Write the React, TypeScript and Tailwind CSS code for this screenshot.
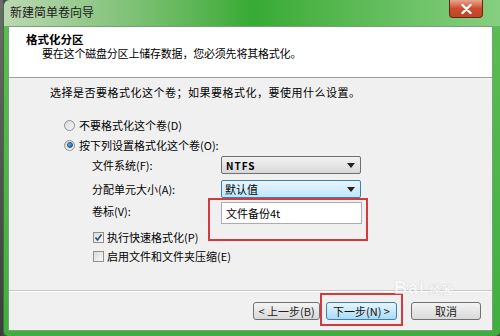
import React from "react";

const font = { fontFamily: '"Noto Sans CJK SC", "Noto Sans", sans-serif' };

function Radio({ checked }: { checked?: boolean }) {
  return (
    <span className="w-[11px] h-[11px] rounded-full border border-[#8e8f8f] bg-gradient-to-br from-[#d8d8d8] to-[#f8f8f8] flex items-center justify-center shrink-0">
      {checked && (
        <span className="w-[6px] h-[6px] rounded-full bg-gradient-to-br from-[#7dc3f0] to-[#1a5f9c] border border-[#1b4f80]" />
      )}
    </span>
  );
}

function Check({ checked }: { checked?: boolean }) {
  return (
    <span className="w-[11px] h-[11px] border border-[#8e8f8f] bg-gradient-to-br from-[#dcdcdc] to-[#f8f8f8] flex items-center justify-center shrink-0">
      {checked && (
        <svg width="9" height="9" viewBox="0 0 9 9">
          <path d="M1.5 4.5 L3.5 7 L7.5 1.5" stroke="#2b4c78" strokeWidth="1.6" fill="none" />
        </svg>
      )}
    </span>
  );
}

function Arrow() {
  return (
    <svg width="8" height="5" viewBox="0 0 8 5" className="shrink-0">
      <path d="M0 0 H8 L4 5 Z" fill="#222" />
    </svg>
  );
}

export default function App() {
  return (
    <div className="w-[500px] h-[336px] flex overflow-hidden bg-[#4a4a4a] relative text-[11px] text-black" style={font}>
      <div className="w-[3px] bg-gradient-to-b from-[#6b6b6b] to-[#3d3d3d]" />
      <div className="flex-1 flex flex-col rounded-tl-[6px] rounded-b-[5px] bg-gradient-to-b from-[#5cbd55] to-[#3fae3f] border-l border-[#2f7a2f]">
        {/* title bar */}
        <div className="h-[26px] flex items-center pl-[6px] relative bg-gradient-to-r from-[#bcd8b4] via-[#36aa32] to-[#86cf80] rounded-tl-[6px]">
          <span className="text-[12px] leading-[14px] text-[#1a1a1a] pb-[2px]">新建简单卷向导</span>
          <div className="absolute left-[445px] top-0 w-[34px] h-[18px] rounded-b-[4px] border border-t-0 border-[#6b2414] bg-gradient-to-b from-[#e8a58e] via-[#cc4b2c] to-[#c0462a] flex items-center justify-center">
            <svg width="11" height="10" viewBox="0 0 11 10">
              <path d="M1.5 1 L9.5 9 M9.5 1 L1.5 9" stroke="#fff" strokeWidth="2.4" strokeLinecap="round" />
            </svg>
          </div>
        </div>
        {/* content */}
        <div className="flex-1 flex flex-col ml-[4px] mr-[7px] mb-[5px] border border-[#7aa07a] relative">
          <div className="h-[50px] bg-white flex flex-col pt-[5px]">
            <div className="pl-[17px] text-[11.5px] leading-[14px] font-bold">格式化分区</div>
            <div className="pl-[33px] leading-[14px] tracking-[-0.2px]">要在这个磁盘分区上储存数据，您必须先将其格式化。</div>
          </div>
          <div className="h-px bg-[#a0a0a0]" />
          <div className="flex-1 bg-[#f0f0f0] flex flex-col">
            <div className="pl-[41px] pt-[7px] leading-[14px] tracking-[0.5px]">选择是否要格式化这个卷；如果要格式化，要使用什么设置。</div>
            <div className="pl-[55px] mt-[19px] h-[14px] flex items-center gap-[4px]">
              <Radio />
              <span className="leading-[14px]">不要格式化这个卷(D)</span>
            </div>
            <div className="pl-[55px] mt-[6px] h-[14px] flex items-center gap-[4px]">
              <Radio checked />
              <span className="leading-[14px]">按下列设置格式化这个卷(O):</span>
            </div>
            <div className="pl-[83px] mt-[4px] flex items-center h-[18px]">
              <span className="w-[129px]">文件系统(F):</span>
              <div className="w-[140px] h-[18px] rounded-[2px] border border-[#707070] bg-gradient-to-b from-[#f2f2f2] to-[#d8d8d8] flex items-center justify-between pl-[4px] pr-[5px]">
                <span className="font-bold tracking-[1px] text-[10px]">NTFS</span>
                <Arrow />
              </div>
            </div>
            <div className="pl-[83px] mt-[6px] flex items-center h-[18px]">
              <span className="w-[129px]">分配单元大小(A):</span>
              <div className="w-[140px] h-[18px] rounded-[2px] border border-[#3c7fb1] bg-gradient-to-b from-[#eaf6fd] to-[#bee6fd] flex items-center justify-between pl-[2px] pr-[5px]">
                <span className="px-[1px] leading-[14px]">默认值</span>
                <Arrow />
              </div>
            </div>
            <div className="pl-[83px] mt-[4px] flex items-center h-[22px]">
              <span className="w-[129px] pb-[4px]">卷标(V):</span>
              <div className="w-[141px] h-[22px] border border-[#abadb3] bg-white flex items-center pl-[4px]">
                <span className="leading-[14px]">文件备份4t</span>
              </div>
            </div>
            <div className="pl-[84px] mt-[6px] h-[14px] flex items-center gap-[3px]">
              <Check checked />
              <span className="leading-[14px]">执行快速格式化(P)</span>
            </div>
            <div className="pl-[84px] mt-[5px] h-[14px] flex items-center gap-[3px]">
              <Check />
              <span className="leading-[14px]">启用文件和文件夹压缩(E)</span>
            </div>
            <div className="flex-1" />
            <div className="h-px bg-[#c8c8c8]" />
            <div className="h-px bg-white" />
            <div className="pt-[10px] pb-[10px] pr-[11px] flex justify-end">
              <button className="w-[67px] h-[18px] rounded-[3px] border border-[#707070] bg-gradient-to-b from-[#f4f4f4] to-[#d9d9d9] flex items-center justify-center leading-[14px] text-[#222]">
                &lt; 上一步(B)
              </button>
              <button className="ml-[6px] w-[71px] h-[18px] rounded-[3px] border border-[#3c7fb1] bg-gradient-to-b from-[#e9f6fd] to-[#a9dbf6] flex items-center justify-center leading-[14px] text-[#111]">
                下一步(N) &gt;
              </button>
              <button className="ml-[14px] w-[70px] h-[18px] rounded-[3px] border border-[#707070] bg-gradient-to-b from-[#f4f4f4] to-[#d9d9d9] flex items-center justify-center leading-[14px] text-[#222]">
                取消
              </button>
            </div>
          </div>
          {/* red annotation boxes */}
          <div className="absolute left-[199px] top-[171px] w-[160px] h-[43px] border-2 border-[#d23a3e]" />
          <div className="absolute left-[311px] top-[266px] w-[83px] h-[33px] border-2 border-[#d23a3e]" />
          {/* watermark */}
          <div className="absolute left-[385px] top-[252px] text-[18px] font-bold text-white opacity-60 leading-[18px] tracking-[1px]" style={{ fontFamily: '"Liberation Sans", sans-serif', textShadow: "0 0 1px #999" }}>
            Bai<span className="text-[12px] ml-[4px]">经验</span>
          </div>
        </div>
      </div>
    </div>
  );
}
